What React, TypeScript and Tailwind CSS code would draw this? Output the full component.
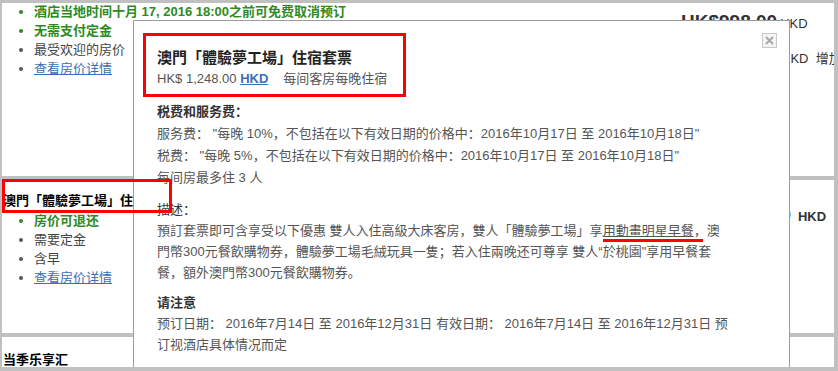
import React from "react";

const green = "text-[#2f8a23]";

const Dot = ({ tone }: { tone: string }) => (
  <span className={`mr-[11px] inline-block h-[4px] w-[4px] shrink-0 rounded-full ${tone}`} />
);

const RateList = ({ items }: { items: { text: string; kind: "green" | "plain" | "link" }[] }) => (
  <ul className="flex flex-col gap-[2px]">
    {items.map((it) => (
      <li key={it.text} className="flex items-center pl-[17px] text-[13px] leading-[17px] whitespace-nowrap">
        <Dot tone={it.kind === "green" ? "bg-[#2f8a23]" : "bg-[#555]"} />
        {it.kind === "green" && <span className={`${green} font-bold`}>{it.text}</span>}
        {it.kind === "plain" && <span className="text-[#444]">{it.text}</span>}
        {it.kind === "link" && <a className="text-[#3b6fb6] underline">{it.text}</a>}
      </li>
    ))}
  </ul>
);

const App = () => {
  return (
    <div className="w-[838px] h-[371px] bg-[#c0c0c0] pt-[3px] pl-[2px] pr-[4px] pb-[4px] font-['Liberation_Sans','Noto_Sans_CJK_SC',sans-serif]">
      <div className="relative h-full overflow-hidden flex flex-col gap-[4px]">
        {/* row 1 */}
        <div className="h-[173px] shrink-0 bg-white flex">
          <div className="flex-1">
            <RateList
              items={[
                { text: "酒店当地时间十月 17, 2016 18:00之前可免费取消预订", kind: "green" },
                { text: "无需支付定金", kind: "green" },
                { text: "最受欢迎的房价", kind: "plain" },
                { text: "查看房价详情", kind: "link" },
              ]}
            />
          </div>
          <div className="w-[153px] shrink-0 pt-[8px] whitespace-nowrap text-[#333]">
            <div className="flex items-baseline">
              <span className="text-[19px] font-bold leading-[22px]">HK$998.00</span>
              <span className="ml-[3px] text-[13px]">HKD</span>
            </div>
            <div className="mt-[16px] pl-[100px] text-[13px] leading-[17px]">HKD&nbsp;&nbsp;增加早餐</div>
          </div>
        </div>

        {/* row 2 */}
        <div className="h-[153px] shrink-0 bg-white flex">
          <div className="flex-1 pt-[12px]">
            <div className="pl-[1px] text-[13px] leading-[17px] font-bold text-black whitespace-nowrap">
              澳門「體驗夢工場」住宿套票
            </div>
            <div className="mt-[3px]">
              <RateList
                items={[
                  { text: "房价可退还", kind: "green" },
                  { text: "需要定金", kind: "plain" },
                  { text: "含早", kind: "plain" },
                  { text: "查看房价详情", kind: "link" },
                ]}
              />
            </div>
          </div>
          <div className="w-[155px] shrink-0 pt-[24px] whitespace-nowrap text-[#333]">
            <div className="flex items-baseline">
              <span className="text-[19px] font-bold leading-[22px]">HK$1,248.00</span>
              <span className="ml-[7px] text-[13px] font-bold">HKD</span>
            </div>
          </div>
        </div>

        {/* row 3 */}
        <div className="flex-1 bg-white pt-[14px]">
          <div className="pl-[1px] text-[13px] leading-[17px] font-bold text-black">当季乐享汇</div>
        </div>

        {/* popup */}
        <div className="absolute left-[131px] top-[17px] w-[657px] h-[400px] bg-white border border-[#9c9c9c] pl-[9px] pt-[12px] text-[13px] text-[#555] whitespace-nowrap">
          <button className="absolute right-[12px] top-[12px] flex h-[15px] w-[15px] items-center justify-center border border-[#c8c8c8] bg-[#f4f4f4]">
            <svg width="9" height="9" viewBox="0 0 9 9">
              <path d="M1 1 L8 8 M8 1 L1 8" stroke="#a8a8a8" strokeWidth="2" />
            </svg>
          </button>

          <div className="flex h-[64px] w-[263px] flex-col border-[3px] border-[#ff0000] pl-[11px] pt-[12px]">
            <div className="text-[15px] font-bold leading-[20px] text-[#222]">澳門「體驗夢工場」住宿套票</div>
            <div className="mt-[1px] leading-[20px]">
              HK$ 1,248.00 <span className="font-bold text-[#3b6fb6] underline">HKD</span>
              <span className="ml-[15px]">每间客房每晚住宿</span>
            </div>
          </div>

          <div className="mt-[4px] pl-[14px] leading-[22px]">
            <div className="font-bold text-[#333]">税费和服务费：</div>
            <div>服务费： "每晚 10%，不包括在以下有效日期的价格中：2016年10月17日 至 2016年10月18日"</div>
            <div>税费： "每晚 5%，不包括在以下有效日期的价格中：2016年10月17日 至 2016年10月18日"</div>
            <div>每间房最多住 3 人</div>
          </div>

          <div className="mt-[10px] pl-[14px] leading-[21px]">
            <div className="text-[#333]">描述：</div>
            <div>
              預訂套票即可含享受以下優惠 雙人入住高級大床客房，雙人「體驗夢工場」享
              <span className="relative underline">
                用動畫明星早餐
                <span className="absolute left-0 right-[-9px] top-[16px] h-[3px] bg-[#ff0000]" />
              </span>
              ，澳
            </div>
            <div>門幣300元餐飲購物券，體驗夢工場毛絨玩具一隻；若入住兩晚还可尊享 雙人“於桃園"享用早餐套</div>
            <div>餐，額外澳門幣300元餐飲購物券。</div>
          </div>

          <div className="mt-[9px] pl-[14px] leading-[21px]">
            <div className="font-bold text-[#333]">请注意</div>
            <div>预订日期： 2016年7月14日 至 2016年12月31日 有效日期： 2016年7月14日 至 2016年12月31日 预</div>
            <div>订视酒店具体情况而定</div>
          </div>
        </div>

        {/* highlight box over the rate title */}
        <div className="absolute left-0 top-[176px] h-[34px] w-[170px] border-[3px] border-[#ff0000]" />
      </div>
    </div>
  );
};

export default App;
